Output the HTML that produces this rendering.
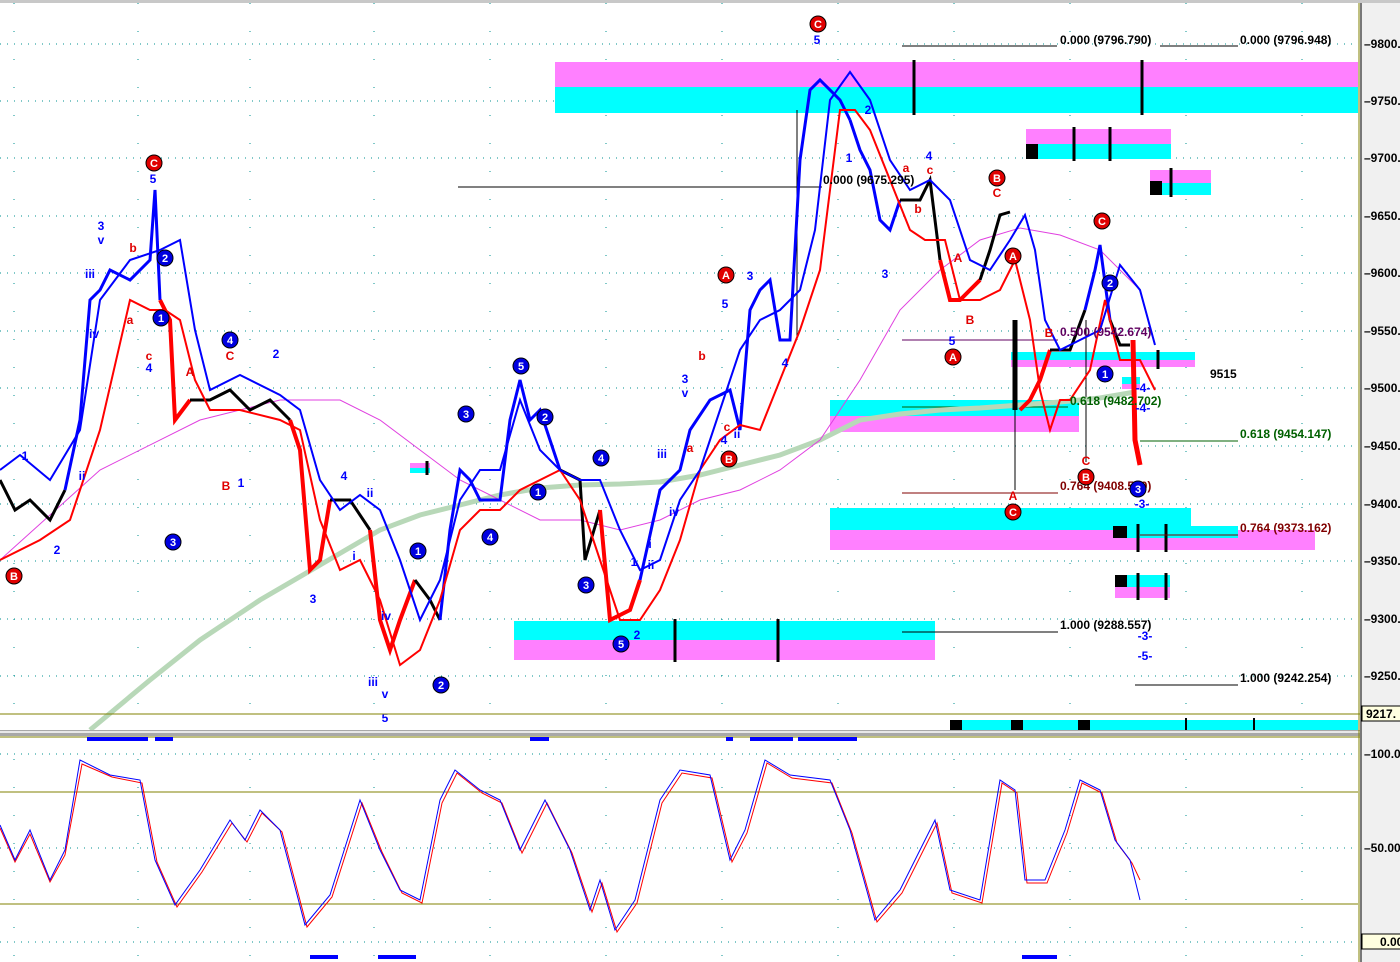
<!DOCTYPE html>
<html><head><meta charset="utf-8"><style>
html,body{margin:0;padding:0;background:#fff;width:1400px;height:962px;overflow:hidden}
svg{display:block}
text{font-family:"Liberation Sans",sans-serif;font-weight:bold}
</style></head><body>
<svg width="1400" height="962" viewBox="0 0 1400 962" xmlns="http://www.w3.org/2000/svg">
<rect x="0" y="0" width="1400" height="962" fill="#fff"/>
<rect x="0" y="0" width="1400" height="3" fill="#c8c8c8"/>
<!-- grid -->
<g stroke="#009090" stroke-width="1" stroke-dasharray="1,6">
<line x1="0" y1="44" x2="1358" y2="44"/><line x1="0" y1="101" x2="1358" y2="101"/><line x1="0" y1="158" x2="1358" y2="158"/><line x1="0" y1="216" x2="1358" y2="216"/><line x1="0" y1="273" x2="1358" y2="273"/><line x1="0" y1="331" x2="1358" y2="331"/><line x1="0" y1="388" x2="1358" y2="388"/><line x1="0" y1="446" x2="1358" y2="446"/><line x1="0" y1="504" x2="1358" y2="504"/><line x1="0" y1="561" x2="1358" y2="561"/><line x1="0" y1="619" x2="1358" y2="619"/><line x1="0" y1="676" x2="1358" y2="676"/>
<line x1="0" y1="754" x2="1358" y2="754"/><line x1="0" y1="848" x2="1358" y2="848"/><line x1="0" y1="942" x2="1358" y2="942"/>
</g>
<g stroke="#009090" stroke-width="1" stroke-dasharray="1,27">
<line x1="14" y1="3" x2="14" y2="962"/><line x1="138" y1="3" x2="138" y2="962"/><line x1="250" y1="3" x2="250" y2="962"/><line x1="374" y1="3" x2="374" y2="962"/><line x1="490" y1="3" x2="490" y2="962"/><line x1="606" y1="3" x2="606" y2="962"/><line x1="722" y1="3" x2="722" y2="962"/><line x1="838" y1="3" x2="838" y2="962"/><line x1="954" y1="3" x2="954" y2="962"/><line x1="1070" y1="3" x2="1070" y2="962"/><line x1="1186" y1="3" x2="1186" y2="962"/><line x1="1302" y1="3" x2="1302" y2="962"/>
</g>
<!-- zones -->
<rect x="555" y="62" width="803" height="25" fill="#ff80ff"/><rect x="555" y="87" width="803" height="26" fill="#00ffff"/>
<rect x="1026" y="129" width="145" height="15" fill="#ff80ff"/><rect x="1026" y="144" width="145" height="15" fill="#00ffff"/><rect x="1026" y="144" width="12" height="15" fill="#000"/>
<rect x="1150" y="170" width="61" height="13" fill="#ff80ff"/><rect x="1150" y="183" width="61" height="12" fill="#00ffff"/><rect x="1150" y="181" width="12" height="14" fill="#000"/>
<rect x="1011" y="352" width="184" height="8" fill="#00ffff"/><rect x="1011" y="360" width="184" height="7" fill="#ff80ff"/>
<rect x="1122" y="377" width="18" height="7" fill="#00ffff"/><rect x="1122" y="384" width="18" height="5" fill="#ff80ff"/>
<rect x="830" y="400" width="249" height="16" fill="#00ffff"/><rect x="830" y="416" width="249" height="16" fill="#ff80ff"/>
<rect x="830" y="508" width="361" height="22" fill="#00ffff"/><rect x="830" y="530" width="485" height="20" fill="#ff80ff"/><rect x="1113" y="526" width="125" height="12" fill="#00ffff"/><rect x="1113" y="526" width="14" height="12" fill="#000"/>
<rect x="1115" y="575" width="55" height="12" fill="#00ffff"/><rect x="1115" y="587" width="55" height="11" fill="#ff80ff"/><rect x="1115" y="575" width="12" height="12" fill="#000"/>
<rect x="514" y="621" width="421" height="19" fill="#00ffff"/><rect x="514" y="640" width="421" height="20" fill="#ff80ff"/>
<rect x="410" y="463" width="20" height="5" fill="#ff80ff"/><rect x="410" y="468" width="20" height="5" fill="#00ffff"/>
<rect x="950" y="720" width="408" height="10" fill="#00ffff"/><rect x="950" y="720" width="12" height="10" fill="#000"/><rect x="1011" y="720" width="12" height="10" fill="#000"/><rect x="1078" y="720" width="12" height="10" fill="#000"/>
<g stroke="#000" stroke-width="3">
<line x1="914" y1="60" x2="914" y2="115"/><line x1="1142" y1="60" x2="1142" y2="115"/><line x1="1074" y1="127" x2="1074" y2="161"/><line x1="1110" y1="127" x2="1110" y2="161"/><line x1="1171" y1="168" x2="1171" y2="197"/><line x1="1158" y1="350" x2="1158" y2="369"/><line x1="1138" y1="524" x2="1138" y2="552"/><line x1="1166" y1="524" x2="1166" y2="552"/><line x1="1138" y1="573" x2="1138" y2="600"/><line x1="1166" y1="573" x2="1166" y2="600"/><line x1="675" y1="619" x2="675" y2="662"/><line x1="778" y1="619" x2="778" y2="662"/><line x1="427" y1="461" x2="427" y2="475"/>
<line x1="1186" y1="718" x2="1186" y2="730" stroke-width="2"/><line x1="1254" y1="718" x2="1254" y2="730" stroke-width="2"/>
</g>
<!-- fib lines -->
<g stroke-width="1">
<line x1="902" y1="46" x2="1057" y2="46" stroke="#000"/><line x1="1160" y1="46" x2="1238" y2="46" stroke="#000"/>
<line x1="458" y1="187" x2="822" y2="187" stroke="#000"/>
<line x1="902" y1="340" x2="1058" y2="340" stroke="#600060"/>
<line x1="902" y1="407" x2="1068" y2="407" stroke="#006000"/>
<line x1="1140" y1="441" x2="1238" y2="441" stroke="#006000"/>
<line x1="902" y1="493" x2="1058" y2="493" stroke="#800000"/>
<line x1="1140" y1="535" x2="1238" y2="535" stroke="#800000"/>
<line x1="902" y1="632" x2="1058" y2="632" stroke="#000"/>
<line x1="1135" y1="685" x2="1238" y2="685" stroke="#000"/>
<line x1="1015" y1="320" x2="1015" y2="490" stroke="#000"/><line x1="1086" y1="320" x2="1086" y2="462" stroke="#000"/><line x1="797" y1="110" x2="797" y2="340" stroke="#000"/>
</g>
<!-- MA green -->
<polyline fill="none" stroke="#b8d8b8" stroke-width="5" points="90,730 150,680 200,640 260,600 320,565 380,530 420,515 460,505 500,495 540,488 580,485 620,484 660,482 700,475 740,465 780,455 820,440 860,420 900,414 940,410 980,408 1020,405 1060,402 1100,398 1135,392"/>
<!-- magenta thin -->
<polyline fill="none" stroke="#e040e0" stroke-width="1" points="0,560 100,470 200,420 280,400 340,400 380,420 420,450 460,480 500,500 540,520 580,520 620,530 660,520 700,500 740,490 780,470 820,440 860,380 900,310 940,270 980,240 1020,228 1060,235 1100,250 1140,290"/>
<!-- price -->
<polyline fill="none" stroke="#000" stroke-width="3" points="0,480 15,510 30,500 50,520 65,490"/>
<polyline fill="none" stroke="#0000ff" stroke-width="3" points="65,490 80,420 90,300 100,290 110,270 130,280 150,260 155,190 160,300"/>
<polyline fill="none" stroke="#ff0000" stroke-width="4" points="160,300 170,320 175,420 190,400"/>
<polyline fill="none" stroke="#000" stroke-width="3" points="190,400 210,400 230,390 250,410 270,400 290,420"/>
<polyline fill="none" stroke="#ff0000" stroke-width="4" points="290,420 300,450 310,570 320,560 330,500"/>
<polyline fill="none" stroke="#000" stroke-width="3" points="330,500 350,500 370,530"/>
<polyline fill="none" stroke="#ff0000" stroke-width="4" points="370,530 380,620 390,650 400,620 415,580"/>
<polyline fill="none" stroke="#000" stroke-width="3" points="415,580 430,600 440,620"/>
<polyline fill="none" stroke="#0000ff" stroke-width="3" points="440,620 450,530 460,470 470,480 480,500 500,500 510,420 520,380 530,420 540,410 560,470"/>
<polyline fill="none" stroke="#000" stroke-width="3" points="560,470 580,480 585,560 600,510"/>
<polyline fill="none" stroke="#ff0000" stroke-width="4" points="600,510 610,620 630,610 640,580"/>
<polyline fill="none" stroke="#0000ff" stroke-width="3" points="640,580 660,490 680,470 690,430 710,400 730,390 740,430 750,310 760,290 770,280 780,340 790,340 800,160 810,90 820,80 840,100 850,120"/>
<polyline fill="none" stroke="#0000ff" stroke-width="3" points="850,120 860,150 870,170 880,220 890,230 900,200"/>
<polyline fill="none" stroke="#000" stroke-width="3" points="900,200 920,200 930,180 940,260"/>
<polyline fill="none" stroke="#ff0000" stroke-width="4" points="940,260 950,300 960,300 980,280"/>
<polyline fill="none" stroke="#000" stroke-width="3" points="980,280 990,250 1000,215 1010,212"/>
<polyline fill="none" stroke="#000" stroke-width="5" points="1015,320 1015,410"/>
<polyline fill="none" stroke="#ff0000" stroke-width="4" points="1020,410 1030,400 1040,380 1050,350"/>
<polyline fill="none" stroke="#000" stroke-width="3" points="1050,350 1070,350 1085,310"/>
<polyline fill="none" stroke="#0000ff" stroke-width="3" points="1085,310 1095,270 1100,245 1110,320"/>
<polyline fill="none" stroke="#000" stroke-width="3" points="1110,320 1120,345 1130,345"/>
<polyline fill="none" stroke="#ff0000" stroke-width="5" points="1133,340 1135,440 1140,465"/>
<!-- red band -->
<polyline fill="none" stroke="#ff0000" stroke-width="2" points="0,560 40,540 70,520 100,430 130,300 150,310 165,310 180,320 195,380 210,410 240,410 280,420 300,430 320,520 340,570 360,560 380,600 400,665 420,650 440,600 460,530 480,510 500,510 520,490 560,470 580,500 600,560 620,620 640,620 660,590 680,540 700,470 720,440 740,425 760,430 780,380 800,330 820,270 840,110 855,110 870,130 890,180 910,230 925,240 945,240 960,300 980,300 1000,290 1015,260 1030,320 1040,390 1050,430 1060,400 1070,400 1090,370 1105,300 1120,360 1140,360 1155,390"/>
<!-- blue band -->
<polyline fill="none" stroke="#0000ff" stroke-width="2" points="0,470 20,455 50,480 80,430 100,300 130,260 160,250 180,240 195,330 210,390 240,375 280,395 300,410 320,480 340,510 360,495 380,510 400,560 420,620 440,580 460,500 480,470 500,470 520,400 540,450 560,470 580,480 600,480 620,530 640,570 660,560 680,500 700,470 720,410 740,350 760,320 780,310 800,290 815,230 830,100 850,72 870,100 890,160 910,190 930,180 950,200 970,260 990,270 1010,240 1025,215 1035,250 1045,320 1060,350 1080,340 1100,330 1120,265 1140,290 1155,345"/>
<!-- fib texts -->
<g font-size="12">
<text x="1060" y="44" fill="#000">0.000 (9796.790)</text>
<text x="1240" y="44" fill="#000">0.000 (9796.948)</text>
<text x="823" y="184" fill="#000">0.000 (9675.295)</text>
<text x="1060" y="336" fill="#600060">0.500 (9542.674)</text>
<text x="1070" y="405" fill="#006000">0.618 (9482.702)</text>
<text x="1240" y="438" fill="#006000">0.618 (9454.147)</text>
<text x="1060" y="490" fill="#800000">0.764 (9408.590)</text>
<text x="1240" y="532" fill="#800000">0.764 (9373.162)</text>
<text x="1060" y="629" fill="#000">1.000 (9288.557)</text>
<text x="1240" y="682" fill="#000">1.000 (9242.254)</text>
<text x="1210" y="378" fill="#000">9515</text>
</g>
<!-- circles -->
<g font-size="11" text-anchor="middle">
<g fill="#e00000" stroke="#000" stroke-width="1">
<circle cx="818" cy="24" r="8"/><circle cx="154" cy="163" r="8"/><circle cx="14" cy="576" r="8"/><circle cx="726" cy="275" r="8"/><circle cx="729" cy="459" r="8"/><circle cx="997" cy="178" r="8"/><circle cx="1013" cy="256" r="8"/><circle cx="953" cy="357" r="8"/><circle cx="1013" cy="512" r="8"/><circle cx="1102" cy="221" r="8"/><circle cx="1086" cy="477" r="8"/>
</g>
<g fill="#fff">
<text x="818" y="28">C</text><text x="154" y="167">C</text><text x="14" y="580">B</text><text x="726" y="279">A</text><text x="729" y="463">B</text><text x="997" y="182">B</text><text x="1013" y="260">A</text><text x="953" y="361">A</text><text x="1013" y="516">C</text><text x="1102" y="225">C</text><text x="1086" y="481">B</text>
</g>
<g fill="#0000e0" stroke="#000" stroke-width="1">
<circle cx="161" cy="318" r="8"/><circle cx="165" cy="258" r="8"/><circle cx="230" cy="340" r="8"/><circle cx="173" cy="542" r="8"/><circle cx="521" cy="366" r="8"/><circle cx="466" cy="414" r="8"/><circle cx="545" cy="417" r="8"/><circle cx="538" cy="492" r="8"/><circle cx="601" cy="458" r="8"/><circle cx="490" cy="537" r="8"/><circle cx="586" cy="585" r="8"/><circle cx="621" cy="644" r="8"/><circle cx="418" cy="551" r="8"/><circle cx="441" cy="685" r="8"/><circle cx="1105" cy="374" r="8"/><circle cx="1110" cy="283" r="8"/><circle cx="1138" cy="489" r="8"/>
</g>
<g fill="#fff">
<text x="161" y="322">1</text><text x="165" y="262">2</text><text x="230" y="344">4</text><text x="173" y="546">3</text><text x="521" y="370">5</text><text x="466" y="418">3</text><text x="545" y="421">2</text><text x="538" y="496">1</text><text x="601" y="462">4</text><text x="490" y="541">4</text><text x="586" y="589">3</text><text x="621" y="648">5</text><text x="418" y="555">1</text><text x="441" y="689">2</text><text x="1105" y="378">1</text><text x="1110" y="287">2</text><text x="1138" y="493">3</text>
</g>
</g>
<!-- small labels -->
<g font-size="12" text-anchor="middle" font-weight="normal">
<g fill="#0000ff">
<text x="817" y="44">5</text><text x="153" y="183">5</text><text x="101" y="230">3</text><text x="101" y="244">v</text><text x="90" y="278">iii</text><text x="94" y="338">iv</text><text x="80" y="424">i</text><text x="82" y="480">ii</text><text x="25" y="460">1</text><text x="57" y="554">2</text><text x="149" y="372">4</text><text x="276" y="358">2</text><text x="241" y="487">1</text><text x="313" y="603">3</text><text x="344" y="480">4</text><text x="370" y="497">ii</text><text x="354" y="560">i</text><text x="386" y="620">iv</text><text x="373" y="686">iii</text><text x="385" y="698">v</text><text x="385" y="722">5</text><text x="750" y="280">3</text><text x="725" y="308">5</text><text x="785" y="367">4</text><text x="685" y="383">3</text><text x="685" y="397">v</text><text x="741" y="412">i</text><text x="724" y="444">4</text><text x="737" y="438">ii</text><text x="662" y="458">iii</text><text x="674" y="516">iv</text><text x="650" y="548">i</text><text x="634" y="566">1</text><text x="651" y="569">ii</text><text x="637" y="639">2</text><text x="868" y="114">2</text><text x="849" y="162">1</text><text x="885" y="278">3</text><text x="929" y="160">4</text><text x="952" y="345">5</text><text x="1142" y="508">-3-</text><text x="1143" y="392">-4-</text><text x="1143" y="412">-4-</text><text x="1145" y="640">-3-</text><text x="1145" y="660">-5-</text>
</g>
<g fill="#e00000">
<text x="133" y="252">b</text><text x="130" y="324">a</text><text x="149" y="360">c</text><text x="190" y="376">A</text><text x="230" y="360">C</text><text x="226" y="490">B</text><text x="702" y="360">b</text><text x="690" y="452">a</text><text x="727" y="431">c</text><text x="906" y="172">a</text><text x="930" y="174">c</text><text x="918" y="213">b</text><text x="958" y="262">A</text><text x="970" y="324">B</text><text x="997" y="197">C</text><text x="1049" y="337">B</text><text x="1086" y="465">C</text><text x="1013" y="500">A</text>
</g>
</g>
<!-- panel separators -->
<line x1="0" y1="714" x2="1360" y2="714" stroke="#808000"/>
<rect x="0" y="730" width="1400" height="6" fill="#a8a8a8"/><rect x="0" y="731" width="1400" height="2" fill="#e8e8e8"/>
<line x1="0" y1="737" x2="1360" y2="737" stroke="#808000"/>
<g fill="#0000ff"><rect x="87" y="737" width="61" height="4"/><rect x="155" y="737" width="18" height="4"/><rect x="530" y="737" width="19" height="4"/><rect x="726" y="737" width="7" height="4"/><rect x="750" y="737" width="43" height="4"/><rect x="798" y="737" width="59" height="4"/>
<rect x="310" y="955" width="28" height="4"/><rect x="378" y="955" width="38" height="4"/><rect x="1022" y="955" width="35" height="4"/></g>
<!-- oscillator -->
<line x1="0" y1="792" x2="1358" y2="792" stroke="#808000"/><line x1="0" y1="904" x2="1358" y2="904" stroke="#808000"/>
<polyline fill="none" stroke="#ff0000" stroke-width="1" points="0,828 15,862 30,834 50,882 65,855 82,764 112,777 142,783 157,862 177,907 202,872 232,823 247,842 262,813 282,832 307,927 332,897 362,803 382,852 402,893 422,903 442,803 457,773 482,793 502,803 522,853 547,803 572,853 592,912 602,883 617,932 637,903 662,803 682,773 712,778 732,862 747,833 767,763 792,778 832,783 852,833 877,922 902,893 917,863 937,823 952,893 982,903 1002,783 1017,793 1027,883 1047,883 1067,833 1082,783 1102,793 1117,843 1132,863 1140,880"/>
<polyline fill="none" stroke="#0000ff" stroke-width="1" points="0,825 15,860 30,830 50,880 65,850 80,760 110,775 140,780 155,860 175,905 200,870 230,820 245,840 260,810 280,830 305,925 330,895 360,800 380,850 400,890 420,900 440,800 455,770 480,790 500,800 520,850 545,800 570,850 590,910 600,880 615,930 635,900 660,800 680,770 710,775 730,860 745,830 765,760 790,775 830,780 850,830 875,920 900,890 915,860 935,820 950,890 980,900 1000,780 1015,790 1025,880 1045,880 1065,830 1080,780 1100,790 1115,840 1130,860 1140,900"/>
<!-- axis -->
<rect x="1360" y="3" width="40" height="959" fill="#f0f0f0"/>
<line x1="1359" y1="3" x2="1359" y2="962" stroke="#808000" stroke-width="1"/><line x1="1361" y1="3" x2="1361" y2="962" stroke="#000" stroke-width="1"/>
<g font-size="12" fill="#000">
<text x="1364" y="48">–9800.</text><text x="1364" y="105">–9750.</text><text x="1364" y="162">–9700.</text><text x="1364" y="220">–9650.</text><text x="1364" y="277">–9600.</text><text x="1364" y="335">–9550.</text><text x="1364" y="392">–9500.</text><text x="1364" y="450">–9450.</text><text x="1364" y="508">–9400.</text><text x="1364" y="565">–9350.</text><text x="1364" y="623">–9300.</text><text x="1364" y="680">–9250.</text>
<text x="1364" y="758">–100.0</text><text x="1364" y="852">–50.00</text>
</g>
<rect x="1362" y="706" width="40" height="15" fill="#ffffe0" stroke="#000"/><text x="1366" y="718" font-size="12">9217.</text>
<rect x="1362" y="934" width="40" height="15" fill="#ffffe0" stroke="#000"/><text x="1380" y="946" font-size="12">0.00</text>
</svg>
</body></html>
